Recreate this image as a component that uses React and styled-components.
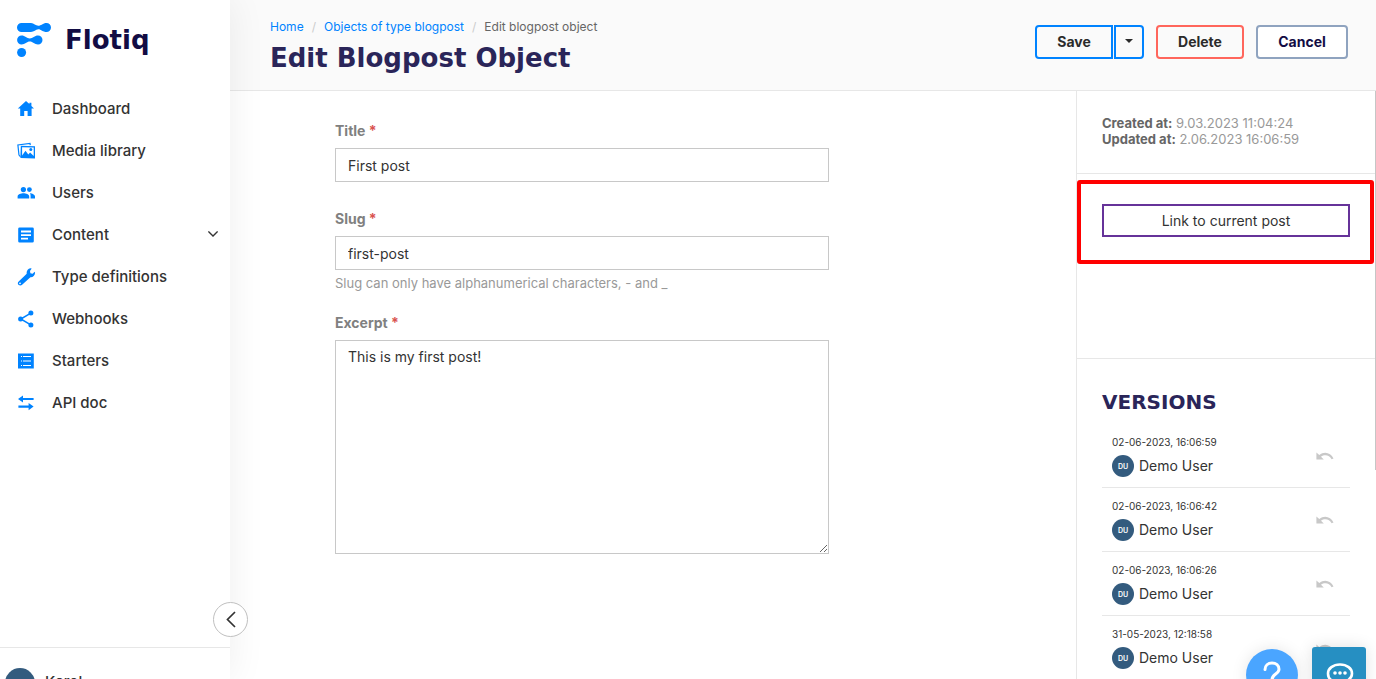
import React from 'react';
import styled, { createGlobalStyle } from 'styled-components';

const Global = createGlobalStyle`
  *, *::before, *::after { box-sizing: border-box; }
  body {
    margin: 0;
    font-family: Inter, "Liberation Sans", sans-serif;
    color: #333;
    background: #fff;
  }
  button, input, textarea { font-family: inherit; color: inherit; margin: 0; }
  h1, h2, p, ul, ol { margin: 0; padding: 0; }
  ul, ol { list-style: none; }
  a { text-decoration: none; }
`;

const Shell = styled.div`
  display: grid;
  grid-template-columns: 230px minmax(0, 1fr);
  height: 100vh;
  overflow: hidden;
`;

const Sidebar = styled.aside`
  position: relative;
  z-index: 1;
  display: flex;
  flex-direction: column;
  min-height: 0;
  background: #fff;
  box-shadow: 0 0 36px rgba(0, 0, 0, 0.07);
`;

const Brand = styled.a`
  display: flex;
  align-items: center;
  gap: 14px;
  padding: 20px 0 0 17px;
  height: 60px;
  color: #120c44;
  font: bold 26px/34px "DejaVu Sans", sans-serif;
`;

const Nav = styled.ul`
  flex: 1;
  min-height: 0;
  padding-top: 28px;
`;

const NavLink = styled.a`
  display: flex;
  align-items: center;
  height: 42px;
  padding: 0 12px 0 17px;
  color: #333;
  font-size: 15px;
  font-weight: 500;
  line-height: 20px;

  svg:first-child { flex: none; margin-right: 17px; color: #0083ff; }
`;

const NavLabel = styled.span`
  flex: 1;
`;

const Account = styled.a`
  display: flex;
  align-items: flex-start;
  gap: 10px;
  flex: none;
  height: 32px;
  padding: 20px 0 0 5px;
  border-top: 1px solid #e7e7e7;
  color: #333;
  font-size: 15px;
  font-weight: 500;
  line-height: 28px;
`;

const Avatar = styled.span`
  display: inline-flex;
  align-items: center;
  justify-content: center;
  flex: none;
  width: ${(p) => p.$size}px;
  height: ${(p) => p.$size}px;
  border-radius: 50%;
  background: #335b7e;
  color: #fff;
  font-size: 7px;
  font-weight: 600;
  line-height: 1;
`;

const Collapse = styled.button`
  position: absolute;
  right: -18px;
  bottom: 42px;
  display: flex;
  align-items: center;
  justify-content: center;
  width: 35px;
  height: 35px;
  padding: 0;
  border: 1px solid #c0c0c0;
  border-radius: 50%;
  background: #fff;
`;

const Page = styled.div`
  display: flex;
  flex-direction: column;
  min-width: 0;
  min-height: 0;
`;

const Header = styled.header`
  display: flex;
  justify-content: space-between;
  align-items: flex-start;
  flex: none;
  height: 91px;
  padding: 17px 28px 0 40px;
  border-bottom: 1px solid #e7e7e7;
  background: #fafafa;
`;

const Crumbs = styled.ol`
  display: flex;
  font-size: 12px;
  line-height: 20px;
  color: #666;

  li + li::before { content: "/"; padding: 0 8px; color: #ccc; }
  a { color: #0083ff; }
`;

const Title = styled.h1`
  color: #2a2559;
  font: bold 26px/36px "DejaVu Sans", sans-serif;
  margin-top: 3px;
`;

const Actions = styled.div`
  display: flex;
  gap: 12px;
  padding-top: 8px;
`;

const Split = styled.div`
  display: flex;
  gap: 1px;
`;

const tones = {
  save: ['#0083ff', 'transparent', '#2b2b2b'],
  danger: ['#ff665c', 'transparent', '#2b2b2b'],
  plain: ['#8fa3bf', '#fff', '#120c44'],
};

const Button = styled.button`
  display: flex;
  align-items: center;
  justify-content: center;
  width: ${(p) => p.$width}px;
  height: 34px;
  padding: 0 0 2px;
  border: 2px solid ${(p) => tones[p.$tone][0]};
  border-radius: ${(p) => p.$radius || '4px'};
  background: ${(p) => tones[p.$tone][1]};
  color: ${(p) => tones[p.$tone][2]};
  font-size: 14px;
  font-weight: 700;
`;

const Body = styled.div`
  display: flex;
  flex: 1;
  min-height: 0;
`;

const Form = styled.form`
  flex: 1;
  min-width: 0;
  padding: 30px 247px 0 105px;
`;

const Field = styled.div`
  display: flex;
  flex-direction: column;
  margin-bottom: ${(p) => (p.$hinted ? 21 : 27)}px;
`;

const Label = styled.label`
  margin-bottom: 7px;
  color: #808080;
  font-size: 14px;
  font-weight: 700;
  line-height: 20px;

  span { color: #d9534f; }
`;

const Input = styled.input`
  height: 34px;
  padding: 0 12px;
  border: 1px solid #c8c8c8;
  background: #fff;
  font-size: 14px;
`;

const TextArea = styled.textarea`
  height: 214px;
  padding: 6px 12px;
  border: 1px solid #c8c8c8;
  background: #fff;
  font-size: 14px;
  line-height: 20px;
  resize: both;
`;

const Hint = styled.p`
  margin-top: 4px;
  color: #999;
  font-size: 13px;
  line-height: 18px;
`;

const Panel = styled.aside`
  position: relative;
  flex: none;
  width: 300px;
  border-left: 1px solid #e7e7e7;
  overflow: hidden;
`;

const ScrollThumb = styled.span`
  position: absolute;
  top: 0;
  right: 0;
  width: 1px;
  height: 379px;
  background: #c6c6c6;
`;

const Dates = styled.section`
  height: 83px;
  padding: 24px 25px 0;
  border-bottom: 1px solid #e7e7e7;
  color: #999;
  font-size: 13px;
  line-height: 16px;

  strong { color: #666; font-weight: 700; }
`;

const Plugins = styled.section`
  height: 185px;
  padding-top: 6px;
  border-bottom: 1px solid #e7e7e7;
`;

const Highlight = styled.div`
  margin-right: 2px;
  padding: 20px;
  border: 4px solid #f00;
  border-radius: 3px;
`;

const PostLink = styled.a`
  display: block;
  height: 33px;
  margin: 0 0 3px 1px;
  border: 2px solid #663399;
  color: #333;
  font-size: 14px;
  line-height: 29px;
  text-align: center;
`;

const Versions = styled.section`
  padding: 29px 26px 0 25px;
`;

const PanelTitle = styled.h2`
  color: #2a2559;
  font: bold 20px/28px "DejaVu Sans", sans-serif;
  margin-bottom: 8px;
`;

const Version = styled.li`
  display: flex;
  align-items: center;
  justify-content: space-between;
  height: 64px;
  padding: 0 16px 0 10px;
  border-bottom: 1px solid #e7e7e7;
`;

const VersionDate = styled.time`
  display: block;
  font-size: 10px;
  line-height: 16px;
`;

const Author = styled.div`
  display: flex;
  align-items: center;
  gap: 5px;
  margin-top: 5px;
  font-size: 14px;
  line-height: 22px;
`;

const Undo = styled.button`
  display: flex;
  padding: 0;
  border: 0;
  background: none;
  color: #c8c8c8;
`;

const Help = styled.button`
  position: fixed;
  z-index: 2;
  right: 78px;
  bottom: -22px;
  display: flex;
  justify-content: center;
  width: 52px;
  height: 52px;
  padding: 12px 0 0;
  border: 0;
  border-radius: 50%;
  background: #4aa5ff;
  box-shadow: 0 0 16px rgba(0, 0, 0, 0.1);
`;

const Chat = styled.button`
  position: fixed;
  z-index: 2;
  right: 10px;
  bottom: -22px;
  display: flex;
  justify-content: center;
  width: 54px;
  height: 54px;
  padding: 14px 0 0;
  border: 0;
  border-radius: 3px;
  background: #268fc2;
  box-shadow: 0 0 16px rgba(0, 0, 0, 0.12);
`;

const Icon = ({ children, size = 18, box = '0 0 18 18' }) => (
  <svg width={size} height={size} viewBox={box} fill="currentColor" aria-hidden="true">
    {children}
  </svg>
);

const icons = {
  home: <path d="M9 1 .8 8.4h2.4V16h4v-5h3.4v5h4V8.4h2.4L14.4 6V2.8h-2v1.3z" />,
  media: (
    <>
      <path d="M2 13.2.9 3 13 1.400l.3 1.800M2 13.200l1.500 1.400" fill="none" stroke="currentColor" strokeWidth="1.200" />
      <path fillRule="evenodd" d="M3.800 3.800 18 4.200v12.400L3.400 15.900zM5.100 5.200v8.200l3.400-4.600 2.800 3.800 1.800-2 3.600 3.400V5.500z" />
      <circle cx="13.800" cy="7.600" r="1.500" />
    </>
  ),
  users: (
    <>
      <circle cx="6.400" cy="5.600" r="2.600" />
      <circle cx="12.400" cy="5.600" r="2.400" />
      <path d="M.6 14.400v-2c0-2 3.500-3.200 5.900-3.200s5.700 1.200 5.700 3.200v2zM13.600 14.400H18v-2c0-1.900-2.900-3-5-3.200.5.700.6 1.800.6 3z" />
    </>
  ),
  content: (
    <path fillRule="evenodd" d="M2.600 1.400h12.800q1.400 0 1.400 1.400v12.400q0 1.400-1.400 1.400H2.600q-1.400 0-1.400-1.400V2.800q0-1.400 1.400-1.400zM4 4.600v1.800h10V4.600zM4 8.200V10h10V8.200zM4 11.800v1.800h7v-1.800z" />
  ),
  wrench: (
    <path d="M13.300.3 14.700.4 13 3l.4 2.200 2.200.5 2-1.900.4.800c.2 2.700-2 4.900-4.600 4.600L5.400 16.600C3.800 18.200 1.300 17.600.9 15.800c-.2-.9.1-1.700.8-2.300L9.700 5.800C9.200 3 11 .6 13.300.3zM3 14.400a.9.900 0 1 0 .1 1.800.9.900 0 0 0-.1-1.800z" fillRule="evenodd" />
  ),
  share: (
    <>
      <path d="M13.800 3.200 3.800 9l10 5.800" fill="none" stroke="currentColor" strokeWidth="1.500" />
      <circle cx="13.900" cy="3.100" r="2.500" />
      <circle cx="3.600" cy="9" r="2.500" />
      <circle cx="13.900" cy="14.900" r="2.500" />
    </>
  ),
  list: (
    <path fillRule="evenodd" d="M1 1.400h15.800v15.200H1zM4 4v1h1V4zM6 4v1h8V4zM4 8.500v1h1v-1zM6 8.500v1h8v-1zM4 13v1h1v-1zM6 13v1h8v-1z" />
  ),
  arrows: <path d="M6 1.400v2.500h10.600v2.200H6v2.500L1 5zM11.600 9v2.500H1.400v2.200h10.200v2.500l5-3.600z" />,
};

const navItems = [
  ['home', 'Dashboard'],
  ['media', 'Media library'],
  ['users', 'Users'],
  ['content', 'Content', true],
  ['wrench', 'Type definitions'],
  ['share', 'Webhooks'],
  ['list', 'Starters'],
  ['arrows', 'API doc'],
];

const versions = [
  '02-06-2023, 16:06:59',
  '02-06-2023, 16:06:42',
  '02-06-2023, 16:06:26',
  '31-05-2023, 12:18:58',
];

const Logo = () => (
  <svg width="34" height="34" viewBox="0 0 34 34" fill="#0083ff" aria-hidden="true">
    <path d="M4.500 0H14c3 0 4.600 2.800 7.300 2.800 2.800 0 4.500-2.800 8.200-2.800a4.500 4.500 0 0 1 0 9c-3.700 0-5.400-2.800-8.200-2.800C18.600 6.200 17 9 14 9H4.500a4.500 4.500 0 0 1 0-9z" />
    <path d="M4.600 12.500c3.400 0 5.200 2.900 8.200 2.900s4.800-2.900 8.200-2.900a4.500 4.500 0 0 1 0 9c-3.400 0-5.200-2.900-8.200-2.900s-4.800 2.900-8.200 2.900a4.500 4.500 0 0 1 0-9z" />
    <circle cx="4.600" cy="29.500" r="4.500" />
  </svg>
);

const Required = ({ id, children }) => (
  <Label htmlFor={id}>
    {children} <span>*</span>
  </Label>
);

export default function App() {
  return (
    <>
      <Global />
      <Shell>
        <Sidebar>
          <Brand href="#">
            <Logo />
            Flotiq
          </Brand>
          <Nav>
            {navItems.map(([icon, label, expandable]) => (
              <li key={label}>
                <NavLink href="#">
                  <Icon>{icons[icon]}</Icon>
                  <NavLabel>{label}</NavLabel>
                  {expandable && (
                    <svg width="10" height="10" viewBox="0 0 10 10" fill="none" stroke="#333" strokeWidth="1.400" aria-hidden="true">
                      <path d="M.4 1.400 5 6l4.600-4.600" />
                    </svg>
                  )}
                </NavLink>
              </li>
            ))}
          </Nav>
          <Account href="#">
            <Avatar $size={30} />
            Karol
          </Account>
          <Collapse type="button" aria-label="Collapse menu">
            <svg width="10" height="17" viewBox="0 0 10 17" fill="none" stroke="#333" strokeWidth="1.700" aria-hidden="true">
              <path d="M9 1 1.500 8.500 9 16" />
            </svg>
          </Collapse>
        </Sidebar>
        <Page>
          <Header>
            <div>
              <nav aria-label="Breadcrumb">
                <Crumbs>
                  <li><a href="#">Home</a></li>
                  <li><a href="#">Objects of type blogpost</a></li>
                  <li>Edit blogpost object</li>
                </Crumbs>
              </nav>
              <Title>Edit Blogpost Object</Title>
            </div>
            <Actions>
              <Split>
                <Button type="submit" form="post" $tone="save" $width={78} $radius="4px 0 0 4px">Save</Button>
                <Button type="button" $tone="save" $width={30} $radius="0 4px 4px 0" aria-label="More save options">
                  <svg width="8" height="4" viewBox="0 0 8 4" fill="currentColor" aria-hidden="true">
                    <path d="M0 0h8L4 4z" />
                  </svg>
                </Button>
              </Split>
              <Button type="button" $tone="danger" $width={88}>Delete</Button>
              <Button type="button" $tone="plain" $width={92}>Cancel</Button>
            </Actions>
          </Header>
          <Body>
            <Form id="post">
              <Field>
                <Required id="title">Title</Required>
                <Input id="title" defaultValue="First post" />
              </Field>
              <Field $hinted>
                <Required id="slug">Slug</Required>
                <Input id="slug" defaultValue="first-post" />
                <Hint>Slug can only have alphanumerical characters, - and _</Hint>
              </Field>
              <Field>
                <Required id="excerpt">Excerpt</Required>
                <TextArea id="excerpt" defaultValue="This is my first post!" />
              </Field>
            </Form>
            <Panel>
              <ScrollThumb />
              <Dates>
                <p><strong>Created at:</strong> 9.03.2023 11:04:24</p>
                <p><strong>Updated at:</strong> 2.06.2023 16:06:59</p>
              </Dates>
              <Plugins>
                <Highlight>
                  <PostLink href="#">Link to current post</PostLink>
                </Highlight>
              </Plugins>
              <Versions>
                <PanelTitle>VERSIONS</PanelTitle>
                <ul>
                  {versions.map((date) => (
                    <Version key={date}>
                      <div>
                        <VersionDate>{date}</VersionDate>
                        <Author>
                          <Avatar $size={22}>DU</Avatar>
                          Demo User
                        </Author>
                      </div>
                      <Undo type="button" aria-label="Restore version">
                        <svg width="18" height="8" viewBox="0 0 18 8" aria-hidden="true">
                          <path d="M.4.400v7h7.400L5 4.800c3.600-2.800 8.600-1.600 10.600 2.400l1.900-.7C14.800.700 8.300-1.200 3.300 3.100z" fill="currentColor" />
                        </svg>
                      </Undo>
                    </Version>
                  ))}
                </ul>
              </Versions>
            </Panel>
          </Body>
        </Page>
      </Shell>
      <Help type="button" aria-label="Help">
        <svg width="18" height="28" viewBox="0 0 18 28" fill="none" stroke="#fff" strokeWidth="3" strokeLinecap="round" aria-hidden="true">
          <path d="M2 8.500C2 4.500 5 2 9 2s7 2.500 7 6.200c0 4.800-7 4.800-7 10.300" />
          <path d="M9 25v.2" />
        </svg>
      </Help>
      <Chat type="button" aria-label="Chat">
        <svg width="30" height="28" viewBox="0 0 30 28" fill="none" stroke="#fff" strokeWidth="2.600" aria-hidden="true">
          <path d="M16 3.500c7 0 12 4 12 9s-5 9-12 9c-1.600 0-3-.2-4.400-.6L6 23.500l1-4.400c-2-1.600-3-4-3-6.600 0-5 5-9 12-9z" />
          <g fill="#fff" stroke="none">
            <circle cx="11" cy="12" r="1.800" />
            <circle cx="16" cy="12" r="1.800" />
            <circle cx="21" cy="12" r="1.800" />
          </g>
        </svg>
      </Chat>
    </>
  );
}
